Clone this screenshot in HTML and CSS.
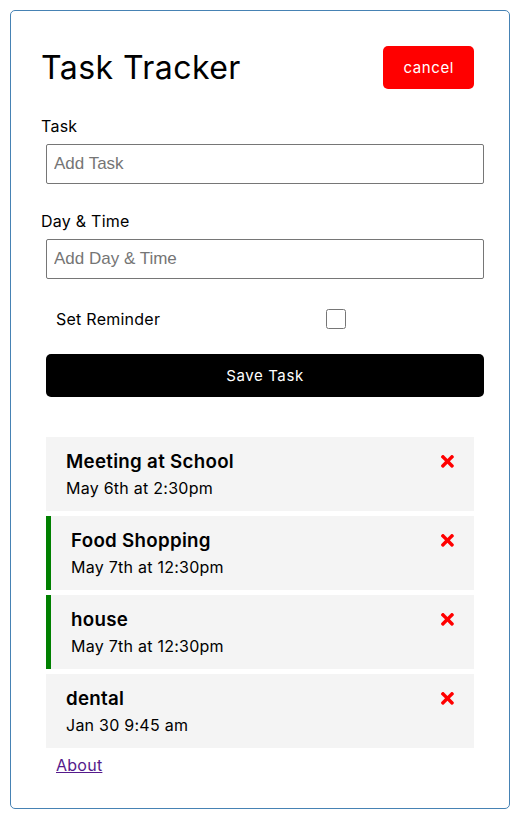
FILE: index.html
```html
<!DOCTYPE html>
<html lang="en">
<head>
<meta charset="utf-8">
<title>Task Tracker</title>
<link rel="stylesheet" href="styles.css">
</head>
<body>
<div class="container">
  <header class="header">
    <h1>Task Tracker</h1>
    <button class="btn btn-cancel">cancel</button>
  </header>
  <form class="add-form">
    <div class="form-control">
      <label>Task</label>
      <input type="text" placeholder="Add Task">
    </div>
    <div class="form-control">
      <label>Day &amp; Time</label>
      <input type="text" placeholder="Add Day &amp; Time">
    </div>
    <div class="form-control form-control-check">
      <label>Set Reminder</label>
      <input type="checkbox">
    </div>
    <input type="submit" value="Save Task" class="btn btn-block">
  </form>
  <div class="tasks">
    <div class="task">
      <h3>Meeting at School <svg class="del" viewBox="0 0 352 512"><path d="M242.72 256l100.07-100.07c12.28-12.28 12.28-32.19 0-44.48l-22.24-22.24c-12.28-12.28-32.19-12.28-44.48 0L176 189.28 75.93 89.21c-12.28-12.28-32.19-12.28-44.48 0L9.21 111.45c-12.28 12.28-12.28 32.19 0 44.48L109.28 256 9.21 356.07c-12.28 12.28-12.28 32.19 0 44.48l22.24 22.24c12.28 12.28 32.2 12.28 44.48 0L176 322.72l100.07 100.07c12.28 12.28 32.2 12.28 44.48 0l22.24-22.24c12.28-12.28 12.28-32.19 0-44.48L242.72 256z"/></svg></h3>
      <p>May 6th at 2:30pm</p>
    </div>
    <div class="task reminder">
      <h3>Food Shopping <svg class="del" viewBox="0 0 352 512"><path d="M242.72 256l100.07-100.07c12.28-12.28 12.28-32.19 0-44.48l-22.24-22.24c-12.28-12.28-32.19-12.28-44.48 0L176 189.28 75.93 89.21c-12.28-12.28-32.19-12.28-44.48 0L9.21 111.45c-12.28 12.28-12.28 32.19 0 44.48L109.28 256 9.21 356.07c-12.28 12.28-12.28 32.19 0 44.48l22.24 22.24c12.28 12.28 32.2 12.28 44.48 0L176 322.72l100.07 100.07c12.28 12.28 32.2 12.28 44.48 0l22.24-22.24c12.28-12.28 12.28-32.19 0-44.48L242.72 256z"/></svg></h3>
      <p>May 7th at 12:30pm</p>
    </div>
    <div class="task reminder">
      <h3>house <svg class="del" viewBox="0 0 352 512"><path d="M242.72 256l100.07-100.07c12.28-12.28 12.28-32.19 0-44.48l-22.24-22.24c-12.28-12.28-32.19-12.28-44.48 0L176 189.28 75.93 89.21c-12.28-12.28-32.19-12.28-44.48 0L9.21 111.45c-12.28 12.28-12.28 32.19 0 44.48L109.28 256 9.21 356.07c-12.28 12.28-12.28 32.19 0 44.48l22.24 22.24c12.28 12.28 32.2 12.28 44.48 0L176 322.72l100.07 100.07c12.28 12.28 32.2 12.28 44.48 0l22.24-22.24c12.28-12.28 12.28-32.19 0-44.48L242.72 256z"/></svg></h3>
      <p>May 7th at 12:30pm</p>
    </div>
    <div class="task">
      <h3>dental <svg class="del" viewBox="0 0 352 512"><path d="M242.72 256l100.07-100.07c12.28-12.28 12.28-32.19 0-44.48l-22.24-22.24c-12.28-12.28-32.19-12.28-44.48 0L176 189.28 75.93 89.21c-12.28-12.28-32.19-12.28-44.48 0L9.21 111.45c-12.28 12.28-12.28 32.19 0 44.48L109.28 256 9.21 356.07c-12.28 12.28-12.28 32.19 0 44.48l22.24 22.24c12.28 12.28 32.2 12.28 44.48 0L176 322.72l100.07 100.07c12.28 12.28 32.2 12.28 44.48 0l22.24-22.24c12.28-12.28 12.28-32.19 0-44.48L242.72 256z"/></svg></h3>
      <p>Jan 30 9:45 am</p>
    </div>
  </div>
  <footer class="footer">
    <a href="#" class="about">About</a>
  </footer>
</div>
</body>
</html>
```

FILE: styles.css
```css
* {
  box-sizing: border-box;
  margin: 0;
  padding: 0;
}

body {
  font-family: Inter, "Noto Sans", sans-serif;
  color: #000;
  background: #fff;
  letter-spacing: 0.25px;
}

.container {
  width: 500px;
  margin: 10px;
  border: 1px solid steelblue;
  border-radius: 5px;
  padding: 30px;
}

.header {
  display: flex;
  justify-content: space-between;
  align-items: center;
  margin-bottom: 20px;
}

.header h1 {
  font-size: 32px;
  font-weight: 400;
  line-height: 44px;
  letter-spacing: 0.45px;
}

.btn {
  display: inline-block;
  background: #000;
  color: #fff;
  border: none;
  padding: 10px 20px;
  margin: 5px;
  border-radius: 5px;
  font-size: 15px;
  line-height: 23px;
  font-family: inherit;
  letter-spacing: 0.6px;
  cursor: pointer;
}

.btn-cancel {
  background: #ff0000;
}

.btn-block {
  display: block;
  width: 100%;
}

.add-form {
  margin-bottom: 40px;
}

.form-control {
  display: flex;
  flex-direction: column;
  margin: 20px 0;
}

.form-control label {
  font-size: 16px;
  line-height: 25px;
}

.form-control input[type="text"] {
  width: 100%;
  height: 40px;
  margin: 5px;
  padding: 3px 7px;
  font-size: 17px;
  font-family: "Liberation Sans", Arial, sans-serif;
  letter-spacing: 0;
  border: 1px solid #767676;
  border-radius: 2px;
  color: #000;
}

.form-control input[type="text"]::placeholder {
  color: #757575;
}

.form-control-check {
  display: grid;
  grid-template-columns: 285px 20px;
  align-items: center;
  height: 30px;
}

.form-control-check label {
  padding-left: 15px;
}

.form-control-check input {
  width: 20px;
  height: 20px;
  margin: 0;
}

.task {
  background: #f4f4f4;
  margin: 5px;
  padding: 10px 20px;
}

.task.reminder {
  border-left: 5px solid green;
}

.task h3 {
  display: flex;
  justify-content: space-between;
  align-items: center;
  font-size: 18.72px;
  font-weight: 600;
  line-height: 29px;
  letter-spacing: 0.3px;
}

.task p {
  font-size: 16px;
  line-height: 25px;
}

.del {
  width: 12.9px;
  height: 18.72px;
  fill: #ff0000;
}

.footer {
  padding-left: 15px;
  font-size: 16px;
  line-height: 25px;
}

.about {
  color: #551a8b;
}
```
